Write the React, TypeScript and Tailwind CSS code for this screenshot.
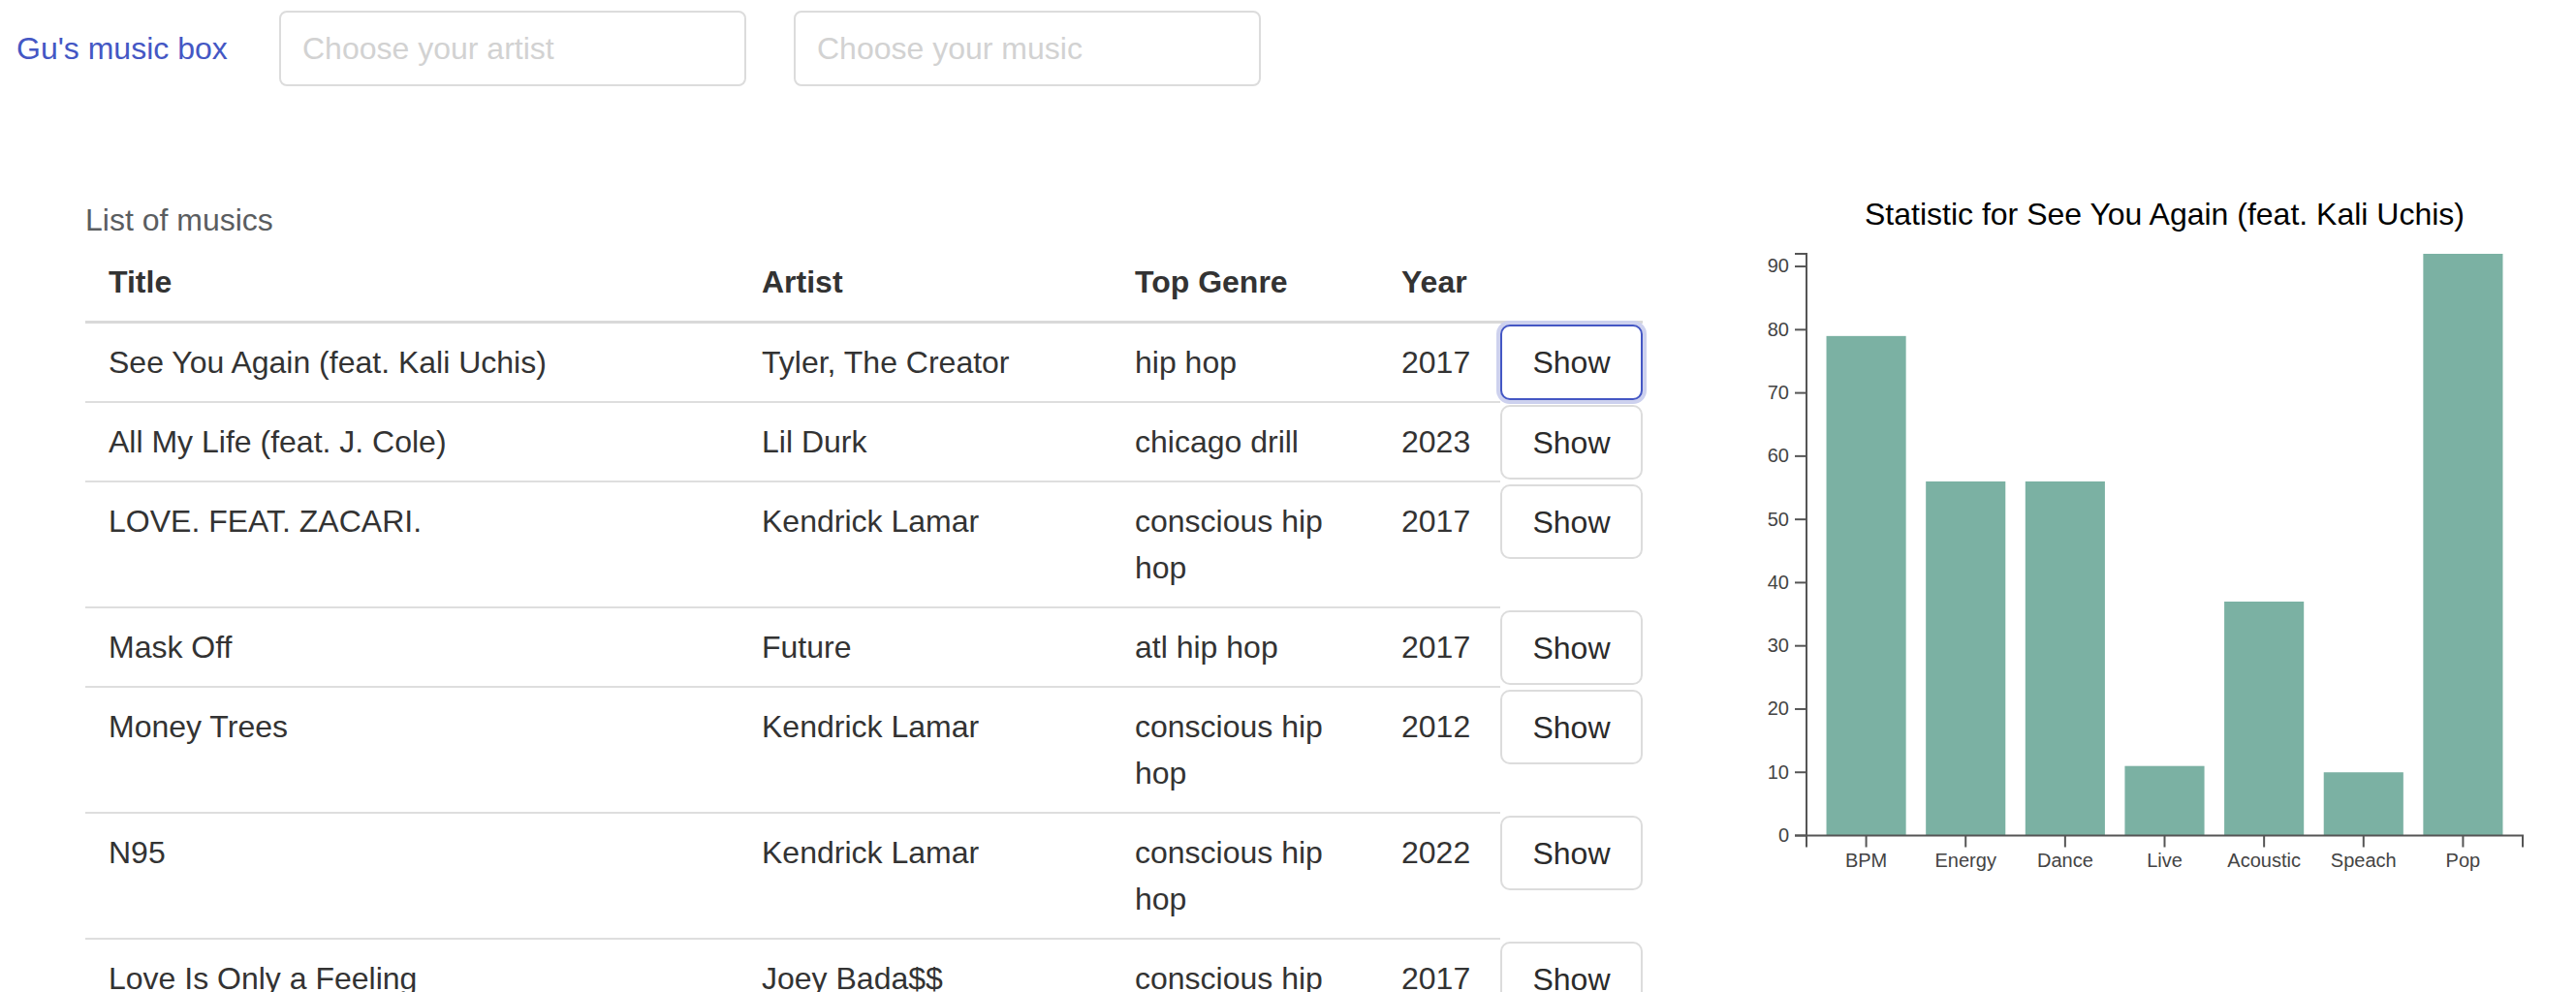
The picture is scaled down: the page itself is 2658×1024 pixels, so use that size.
import React from "react";

const rows = [
  { title: "See You Again (feat. Kali Uchis)", artist: "Tyler, The Creator", genre: "hip hop", year: "2017", focus: true },
  { title: "All My Life (feat. J. Cole)", artist: "Lil Durk", genre: "chicago drill", year: "2023" },
  { title: "LOVE. FEAT. ZACARI.", artist: "Kendrick Lamar", genre: "conscious hip hop", year: "2017" },
  { title: "Mask Off", artist: "Future", genre: "atl hip hop", year: "2017" },
  { title: "Money Trees", artist: "Kendrick Lamar", genre: "conscious hip hop", year: "2012" },
  { title: "N95", artist: "Kendrick Lamar", genre: "conscious hip hop", year: "2022" },
  { title: "Love Is Only a Feeling", artist: "Joey Bada$$", genre: "conscious hip hop", year: "2017" },
];

const stats = [
  { label: "BPM", v: 79 },
  { label: "Energy", v: 56 },
  { label: "Dance", v: 56 },
  { label: "Live", v: 11 },
  { label: "Acoustic", v: 37 },
  { label: "Speach", v: 10 },
  { label: "Pop", v: 92 },
];

function Chart() {
  const left = 84;
  const right = 823;
  const top = 82;
  const zero = 682.5;
  const max = 92;
  const k = (zero - top) / max;
  const step = (right - left) / (stats.length + 0.2);
  const bw = step * 0.8;
  const off = step * 0.2;
  const ticks = [0, 10, 20, 30, 40, 50, 60, 70, 80, 90];
  const ff = "'Liberation Sans', Arial, sans-serif";
  return (
    <svg width={878} height={740} className="block shrink-0">
      <text x={453.5} y={52} textAnchor="middle" fontSize={32} fill="#000" fontFamily={ff}>
        Statistic for See You Again (feat. Kali Uchis)
      </text>
      {stats.map((s, i) => {
        const x = left + off + i * step;
        const h = s.v * k;
        return <rect key={s.label} x={x} y={zero - h} width={bw} height={h} fill="#7bb1a3" />;
      })}
      <path d={`M${left - 12},${top} H${left} V${zero} H${left - 12}`} fill="none" stroke="#555" strokeWidth={2} />
      {ticks.map((t) => {
        const y = zero - t * k;
        return (
          <g key={t}>
            <line x1={left - 12} x2={left} y1={y} y2={y} stroke="#555" strokeWidth={2} />
            <text x={left - 18} y={y} dy="0.32em" textAnchor="end" fontSize={20} fill="#444" fontFamily={ff}>
              {t}
            </text>
          </g>
        );
      })}
      <path d={`M${left},${zero + 12} V${zero} H${right} V${zero + 12}`} fill="none" stroke="#555" strokeWidth={2} />
      {stats.map((s, i) => {
        const cx = left + off + i * step + bw / 2;
        return (
          <g key={s.label}>
            <line x1={cx} x2={cx} y1={zero} y2={zero + 12} stroke="#555" strokeWidth={2} />
            <text x={cx} y={zero + 18} dy="0.71em" textAnchor="middle" fontSize={20} fill="#444" fontFamily={ff}>
              {s.label}
            </text>
          </g>
        );
      })}
    </svg>
  );
}

export default function App() {
  return (
    <div className="h-[1024px] overflow-hidden bg-white font-['Liberation_Sans',Arial,sans-serif] text-[#333333]">
      <nav className="flex items-center pt-[11px] pl-[17px]">
        <span className="w-[222px] text-[32px] leading-[48px] text-[#4457c4]">Gu's music box</span>
        <input
          placeholder="Choose your artist"
          className="ml-[49px] h-[78px] w-[482px] rounded-[8px] border-2 border-[#dcdcdc] px-[22px] text-[32px] outline-none placeholder:text-[#d2d2d2]"
        />
        <input
          placeholder="Choose your music"
          className="ml-[49px] h-[78px] w-[482px] rounded-[8px] border-2 border-[#dcdcdc] px-[22px] text-[32px] outline-none placeholder:text-[#d2d2d2]"
        />
      </nav>
      <main className="mt-[91px] flex items-start">
        <section className="w-[1780px] shrink-0 pl-[88px] pt-[23px]">
          <div className="text-[32px] leading-[48px] text-[#5a5d60]">List of musics</div>
          <table className="w-[1607px] table-fixed border-separate border-spacing-0 text-[32px] leading-[48px]">
            <colgroup>
              <col className="w-[674px]" />
              <col className="w-[385px]" />
              <col className="w-[275px]" />
              <col className="w-[126px]" />
              <col className="w-[147px]" />
            </colgroup>
            <thead>
              <tr>
                <th className="border-b-[3px] border-[#d9d9d9] px-[24px] py-[16px] text-left font-bold">Title</th>
                <th className="border-b-[3px] border-[#d9d9d9] px-[24px] py-[16px] text-left font-bold">Artist</th>
                <th className="border-b-[3px] border-[#d9d9d9] px-[24px] py-[16px] text-left font-bold">Top Genre</th>
                <th className="border-b-[3px] border-[#d9d9d9] px-[24px] py-[16px] text-left font-bold">Year</th>
                <th className="border-b-[3px] border-[#d9d9d9] p-0"></th>
              </tr>
            </thead>
            <tbody>
              {rows.map((r) => (
                <tr key={r.title}>
                  <td className="border-b-2 border-[#dedede] px-[24px] py-[16px] align-top">{r.title}</td>
                  <td className="border-b-2 border-[#dedede] px-[24px] py-[16px] align-top">{r.artist}</td>
                  <td className="border-b-2 border-[#dedede] px-[24px] py-[16px] align-top">{r.genre}</td>
                  <td className="border-b-2 border-[#dedede] px-[24px] py-[16px] align-top">{r.year}</td>
                  <td className="p-0 align-top">
                    {r.focus ? (
                      <button className="mt-[1px] block h-[78px] w-[147px] rounded-[10px] border-2 border-[#4457c4] bg-white text-[32px] text-[#2b2b2b] shadow-[0_0_0_4px_#cdd1ee]">
                        Show
                      </button>
                    ) : (
                      <button className="mt-[2px] block h-[77px] w-[147px] rounded-[10px] border-2 border-[#dcdcdc] bg-white text-[32px] text-[#2b2b2b]">
                        Show
                      </button>
                    )}
                  </td>
                </tr>
              ))}
            </tbody>
          </table>
        </section>
        <Chart />
      </main>
    </div>
  );
}
